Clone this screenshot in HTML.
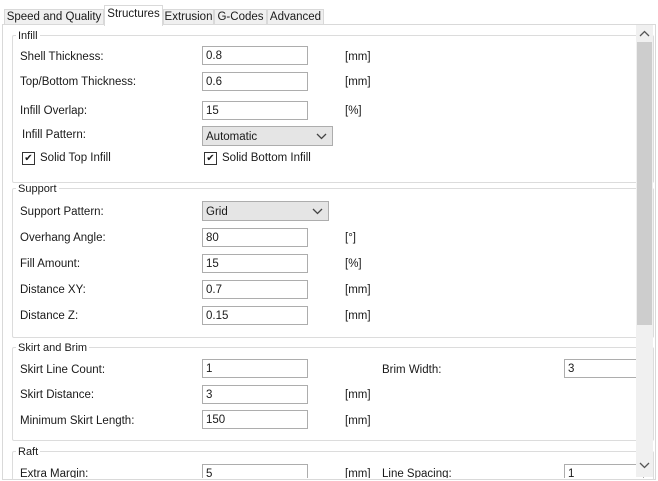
<!DOCTYPE html>
<html><head><style>
html,body{margin:0;width:658px;height:481px;overflow:hidden}
body{background:#fff;font-family:"Liberation Sans",sans-serif;font-size:11.5px;color:#1a1a1a;position:relative}
.a{position:absolute;white-space:nowrap}
.tab{position:absolute;top:9px;height:15px;border:1px solid #d9d9d9;border-bottom:none;background:#f0f0f0;font-size:11.5px;line-height:15px;text-align:center;box-sizing:border-box;overflow:hidden}
.inp{position:absolute;height:19px;border:1px solid #adadad;background:#fff;box-sizing:border-box;padding:2px 3px;line-height:14px}
.sel{position:absolute;height:20px;border:1px solid #adadad;background:#e5e5e5;box-sizing:border-box;padding:3px 3px;line-height:14px}
.sel svg{position:absolute;right:5px;top:6px}
.grp{position:absolute;border:1px solid #dcdcdc;border-radius:2px}
.gl{position:absolute;background:#fff;padding:0 2px;font-size:11px}
.cb{position:absolute;width:11px;height:11px;border:1px solid #333;background:#fff;font-size:10px;line-height:11px;text-align:center}
.l{position:absolute;white-space:nowrap}
</style></head><body>
<div class="tab" style="left:4px;width:100px;height:16px">Speed and Quality</div>
<div class="tab" style="left:163px;width:51px;height:16px">Extrusion</div>
<div class="tab" style="left:214px;width:53px;height:16px">G-Codes</div>
<div class="tab" style="left:267px;width:57px;height:16px">Advanced</div>
<div style="position:absolute;left:2px;top:24px;width:652px;height:454px;border:1px solid #d9d9d9;background:#fff"></div>
<div class="tab" style="left:104px;top:5px;width:59px;height:21px;background:#fff;line-height:17px">Structures</div>

<div class="grp" style="left:12px;top:35px;width:640px;height:146px"></div>
<div class="gl a" style="left:16px;top:30px">Infill</div>
<div class="l" style="left:20px;top:51px">Shell Thickness:</div><div class="inp" style="left:202px;top:46px;width:106px">0.8</div><div class="a" style="left:345px;top:51px">[mm]</div>
<div class="l" style="left:20px;top:76px">Top/Bottom Thickness:</div><div class="inp" style="left:202px;top:72px;width:106px">0.6</div><div class="a" style="left:345px;top:76px">[mm]</div>
<div class="l" style="left:20px;top:105px">Infill Overlap:</div><div class="inp" style="left:202px;top:101px;width:106px">15</div><div class="a" style="left:345px;top:105px">[%]</div>
<div class="l" style="left:22px;top:129px">Infill Pattern:</div><div class="sel" style="left:202px;top:126px;width:131px">Automatic<svg width="11" height="7"><path d="M1 1 L5.5 5.5 L10 1" fill="none" stroke="#444" stroke-width="1.3"/></svg></div>
<div class="cb" style="left:22px;top:152px">✔</div><div class="a" style="left:40px;top:152px">Solid Top Infill</div>
<div class="cb" style="left:204px;top:152px">✔</div><div class="a" style="left:222px;top:152px">Solid Bottom Infill</div>

<div class="grp" style="left:12px;top:188px;width:640px;height:148px"></div>
<div class="gl a" style="left:16px;top:183px">Support</div>
<div class="l" style="left:20px;top:206px">Support Pattern:</div><div class="sel" style="left:202px;top:201px;width:127px">Grid<svg width="11" height="7"><path d="M1 1 L5.5 5.5 L10 1" fill="none" stroke="#444" stroke-width="1.3"/></svg></div>
<div class="l" style="left:20px;top:232px">Overhang Angle:</div><div class="inp" style="left:202px;top:228px;width:106px">80</div><div class="a" style="left:345px;top:232px">[°]</div>
<div class="l" style="left:20px;top:258px">Fill Amount:</div><div class="inp" style="left:202px;top:254px;width:106px">15</div><div class="a" style="left:345px;top:258px">[%]</div>
<div class="l" style="left:20px;top:284px">Distance XY:</div><div class="inp" style="left:202px;top:280px;width:106px">0.7</div><div class="a" style="left:345px;top:284px">[mm]</div>
<div class="l" style="left:20px;top:310px">Distance Z:</div><div class="inp" style="left:202px;top:306px;width:106px">0.15</div><div class="a" style="left:345px;top:310px">[mm]</div>

<div class="grp" style="left:12px;top:347px;width:640px;height:92px"></div>
<div class="gl a" style="left:16px;top:342px">Skirt and Brim</div>
<div class="l" style="left:20px;top:364px">Skirt Line Count:</div><div class="inp" style="left:202px;top:359px;width:106px">1</div>
<div class="a" style="left:382px;top:364px">Brim Width:</div><div class="inp" style="left:564px;top:359px;width:80px">3</div>
<div class="l" style="left:20px;top:389px">Skirt Distance:</div><div class="inp" style="left:202px;top:385px;width:106px">3</div><div class="a" style="left:345px;top:389px">[mm]</div>
<div class="l" style="left:20px;top:415px">Minimum Skirt Length:</div><div class="inp" style="left:202px;top:410px;width:106px">150</div><div class="a" style="left:345px;top:415px">[mm]</div>

<div class="grp" style="left:12px;top:451px;width:640px;height:28px;border-bottom:none"></div>
<div class="gl a" style="left:16px;top:446px">Raft</div>
<div style="position:absolute;left:3px;top:460px;width:650px;height:18px;overflow:hidden">
<div class="a" style="left:17px;top:8px">Extra Margin:</div><div class="inp" style="left:199px;top:4px;width:106px">5</div><div class="a" style="left:342px;top:8px">[mm]</div><div class="a" style="left:379px;top:8px">Line Spacing:</div><div class="inp" style="left:561px;top:4px;width:80px">1</div>
</div>

<div style="position:absolute;left:636px;top:25px;width:17px;height:452px;background:#f0f0f0"></div>
<div style="position:absolute;left:637px;top:42px;width:15px;height:283px;background:#cdcdcd"></div>
<svg style="position:absolute;left:639px;top:30px" width="11" height="8"><path d="M1 6 L5.5 1.5 L10 6" fill="none" stroke="#555" stroke-width="1.3"/></svg>
<svg style="position:absolute;left:639px;top:461px" width="11" height="8"><path d="M1 2 L5.5 6.5 L10 2" fill="none" stroke="#555" stroke-width="1.3"/></svg>
</body></html>
